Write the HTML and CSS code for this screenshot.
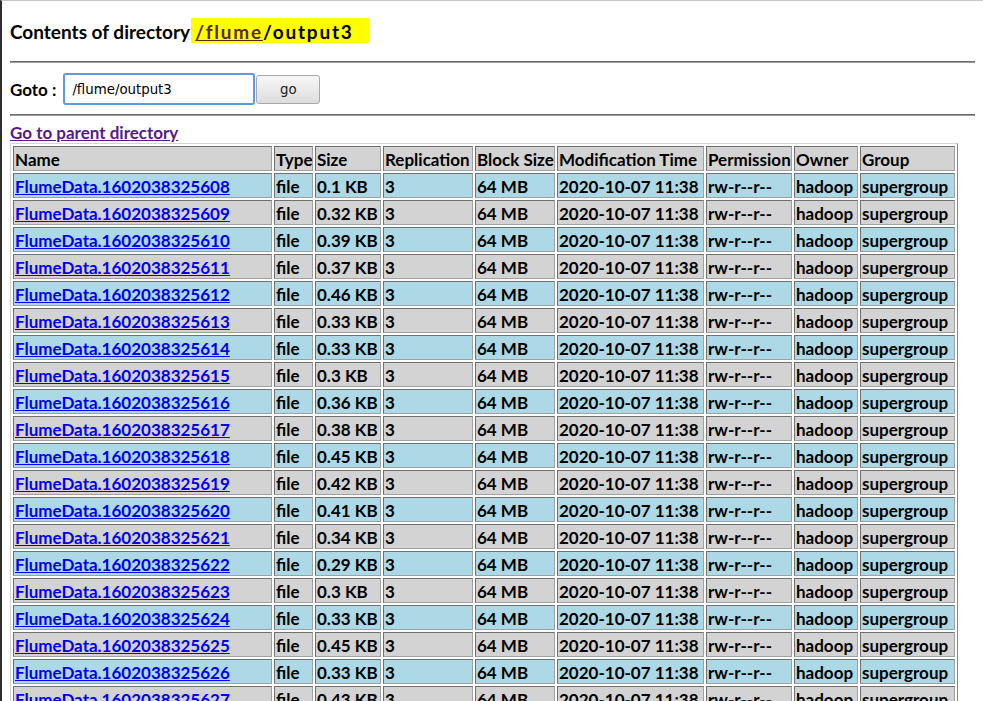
FILE: index.html
```html
<!DOCTYPE html>
<html>
<head>
<meta charset="utf-8">
<title>HDFS:/flume/output3</title>
<link rel="stylesheet" href="styles.css">
</head>
<body>
<h2 class="title">Contents of directory <span class="hl"><a href="#">/flume</a>/output3</span></h2>
<hr>
<form class="goto">
  <label class="goto-label">Goto :</label>
  <input class="goto-input" type="text" value="/flume/output3">
  <button class="goto-btn" type="button">go</button>
</form>
<hr>
<div class="parent"><a href="#">Go to parent directory</a></div>
<table class="listing">
<thead>
<tr>
  <th class="c-name">Name</th><th class="c-type">Type</th><th class="c-size">Size</th><th class="c-rep">Replication</th><th class="c-block">Block Size</th><th class="c-mod">Modification Time</th><th class="c-perm">Permission</th><th class="c-owner">Owner</th><th class="c-group">Group</th>
</tr>
</thead>
<tbody>
<tr class="blue"><td><a href="#">FlumeData.1602038325608</a></td><td>file</td><td>0.1 KB</td><td>3</td><td>64 MB</td><td>2020-10-07 11:38</td><td>rw-r--r--</td><td>hadoop</td><td>supergroup</td></tr>
<tr class="gray"><td><a href="#">FlumeData.1602038325609</a></td><td>file</td><td>0.32 KB</td><td>3</td><td>64 MB</td><td>2020-10-07 11:38</td><td>rw-r--r--</td><td>hadoop</td><td>supergroup</td></tr>
<tr class="blue"><td><a href="#">FlumeData.1602038325610</a></td><td>file</td><td>0.39 KB</td><td>3</td><td>64 MB</td><td>2020-10-07 11:38</td><td>rw-r--r--</td><td>hadoop</td><td>supergroup</td></tr>
<tr class="gray"><td><a href="#">FlumeData.1602038325611</a></td><td>file</td><td>0.37 KB</td><td>3</td><td>64 MB</td><td>2020-10-07 11:38</td><td>rw-r--r--</td><td>hadoop</td><td>supergroup</td></tr>
<tr class="blue"><td><a href="#">FlumeData.1602038325612</a></td><td>file</td><td>0.46 KB</td><td>3</td><td>64 MB</td><td>2020-10-07 11:38</td><td>rw-r--r--</td><td>hadoop</td><td>supergroup</td></tr>
<tr class="gray"><td><a href="#">FlumeData.1602038325613</a></td><td>file</td><td>0.33 KB</td><td>3</td><td>64 MB</td><td>2020-10-07 11:38</td><td>rw-r--r--</td><td>hadoop</td><td>supergroup</td></tr>
<tr class="blue"><td><a href="#">FlumeData.1602038325614</a></td><td>file</td><td>0.33 KB</td><td>3</td><td>64 MB</td><td>2020-10-07 11:38</td><td>rw-r--r--</td><td>hadoop</td><td>supergroup</td></tr>
<tr class="gray"><td><a href="#">FlumeData.1602038325615</a></td><td>file</td><td>0.3 KB</td><td>3</td><td>64 MB</td><td>2020-10-07 11:38</td><td>rw-r--r--</td><td>hadoop</td><td>supergroup</td></tr>
<tr class="blue"><td><a href="#">FlumeData.1602038325616</a></td><td>file</td><td>0.36 KB</td><td>3</td><td>64 MB</td><td>2020-10-07 11:38</td><td>rw-r--r--</td><td>hadoop</td><td>supergroup</td></tr>
<tr class="gray"><td><a href="#">FlumeData.1602038325617</a></td><td>file</td><td>0.38 KB</td><td>3</td><td>64 MB</td><td>2020-10-07 11:38</td><td>rw-r--r--</td><td>hadoop</td><td>supergroup</td></tr>
<tr class="blue"><td><a href="#">FlumeData.1602038325618</a></td><td>file</td><td>0.45 KB</td><td>3</td><td>64 MB</td><td>2020-10-07 11:38</td><td>rw-r--r--</td><td>hadoop</td><td>supergroup</td></tr>
<tr class="gray"><td><a href="#">FlumeData.1602038325619</a></td><td>file</td><td>0.42 KB</td><td>3</td><td>64 MB</td><td>2020-10-07 11:38</td><td>rw-r--r--</td><td>hadoop</td><td>supergroup</td></tr>
<tr class="blue"><td><a href="#">FlumeData.1602038325620</a></td><td>file</td><td>0.41 KB</td><td>3</td><td>64 MB</td><td>2020-10-07 11:38</td><td>rw-r--r--</td><td>hadoop</td><td>supergroup</td></tr>
<tr class="gray"><td><a href="#">FlumeData.1602038325621</a></td><td>file</td><td>0.34 KB</td><td>3</td><td>64 MB</td><td>2020-10-07 11:38</td><td>rw-r--r--</td><td>hadoop</td><td>supergroup</td></tr>
<tr class="blue"><td><a href="#">FlumeData.1602038325622</a></td><td>file</td><td>0.29 KB</td><td>3</td><td>64 MB</td><td>2020-10-07 11:38</td><td>rw-r--r--</td><td>hadoop</td><td>supergroup</td></tr>
<tr class="gray"><td><a href="#">FlumeData.1602038325623</a></td><td>file</td><td>0.3 KB</td><td>3</td><td>64 MB</td><td>2020-10-07 11:38</td><td>rw-r--r--</td><td>hadoop</td><td>supergroup</td></tr>
<tr class="blue"><td><a href="#">FlumeData.1602038325624</a></td><td>file</td><td>0.33 KB</td><td>3</td><td>64 MB</td><td>2020-10-07 11:38</td><td>rw-r--r--</td><td>hadoop</td><td>supergroup</td></tr>
<tr class="gray"><td><a href="#">FlumeData.1602038325625</a></td><td>file</td><td>0.45 KB</td><td>3</td><td>64 MB</td><td>2020-10-07 11:38</td><td>rw-r--r--</td><td>hadoop</td><td>supergroup</td></tr>
<tr class="blue"><td><a href="#">FlumeData.1602038325626</a></td><td>file</td><td>0.33 KB</td><td>3</td><td>64 MB</td><td>2020-10-07 11:38</td><td>rw-r--r--</td><td>hadoop</td><td>supergroup</td></tr>
<tr class="gray"><td><a href="#">FlumeData.1602038325627</a></td><td>file</td><td>0.43 KB</td><td>3</td><td>64 MB</td><td>2020-10-07 11:38</td><td>rw-r--r--</td><td>hadoop</td><td>supergroup</td></tr>
</tbody>
</table>
</body>
</html>
```
FILE: styles.css
```css
html {
  border-top: 1px solid #c6c6c6;
  border-left: 2px solid #2e2e2e;
  background: #fff;
}
body {
  margin: 0 8px 8px;
  font-family: Lato, "Noto Sans", sans-serif;
  color: #000;
}
.title {
  margin: 17px 0 0;
  font-size: 19px;
  font-weight: 700;
  line-height: 22px;
}
.hl {
  display: inline-block;
  background: #ffff00;
  padding: 3px 15px 0 4px;
  margin-left: -3px;
  line-height: 22px;
  letter-spacing: 1.8px;
}
.hl a {
  color: #5c2a10;
}
hr {
  margin: 18px 0 0;
  height: 0;
  border: 0;
  border-top: 1px solid #6b6b6b;
  border-bottom: 1px solid #9a9a9a;
}
.goto {
  display: flex;
  align-items: center;
  margin: 10px 0 0;
  height: 32px;
}
.goto + hr {
  margin-top: 9px;
}
.goto-label {
  font-size: 17px;
  font-weight: 700;
  margin-right: 7px;
}
.goto-input {
  box-sizing: border-box;
  width: 192px;
  height: 32px;
  margin: 0;
  padding: 0 7px;
  border: 2px solid #5f9ade;
  border-radius: 3px;
  font-family: "DejaVu Sans", sans-serif;
  font-size: 13.33px;
  color: #000;
  outline: none;
}
.goto-btn {
  box-sizing: border-box;
  width: 64px;
  height: 29px;
  margin: 0 0 0 1px;
  padding: 0;
  border: 1px solid #a8a8a8;
  border-radius: 3px;
  background: linear-gradient(#f7f7f7, #dddddd);
  font-family: "DejaVu Sans", sans-serif;
  font-size: 13.33px;
  color: #222;
}
.parent {
  margin-top: 7px;
  line-height: 20px;
  font-size: 17px;
  font-weight: 700;
}
.parent a {
  color: #551a8b;
}
.listing {
  table-layout: fixed;
  width: 948px;
  border-collapse: separate;
  border-spacing: 2px;
  border: 1px solid;
  border-color: #d4d4d4 #888888 #888888 #d4d4d4;
  font-size: 17px;
  font-weight: 700;
}
.listing th,
.listing td {
  box-sizing: border-box;
  padding: 2px 1px 0;
  line-height: 21px;
  border: 1px solid;
  border-color: #707070 #a0a0a0 #a0a0a0 #707070;
  text-align: left;
  white-space: nowrap;
  overflow: hidden;
  vertical-align: middle;
}
.listing th {
  background: #d3d3d3;
}
.listing tr.blue td {
  background: #add8e6;
}
.listing tr.gray td {
  background: #d3d3d3;
}
.listing td a {
  color: #0000ee;
}
.c-name { width: 259px; }
.c-type { width: 39px; }
.c-size { width: 66px; }
.c-rep { width: 90px; }
.c-block { width: 80px; }
.c-mod { width: 147px; }
.c-perm { width: 86px; }
.c-owner { width: 64px; }
.c-group { width: 95px; }
```
